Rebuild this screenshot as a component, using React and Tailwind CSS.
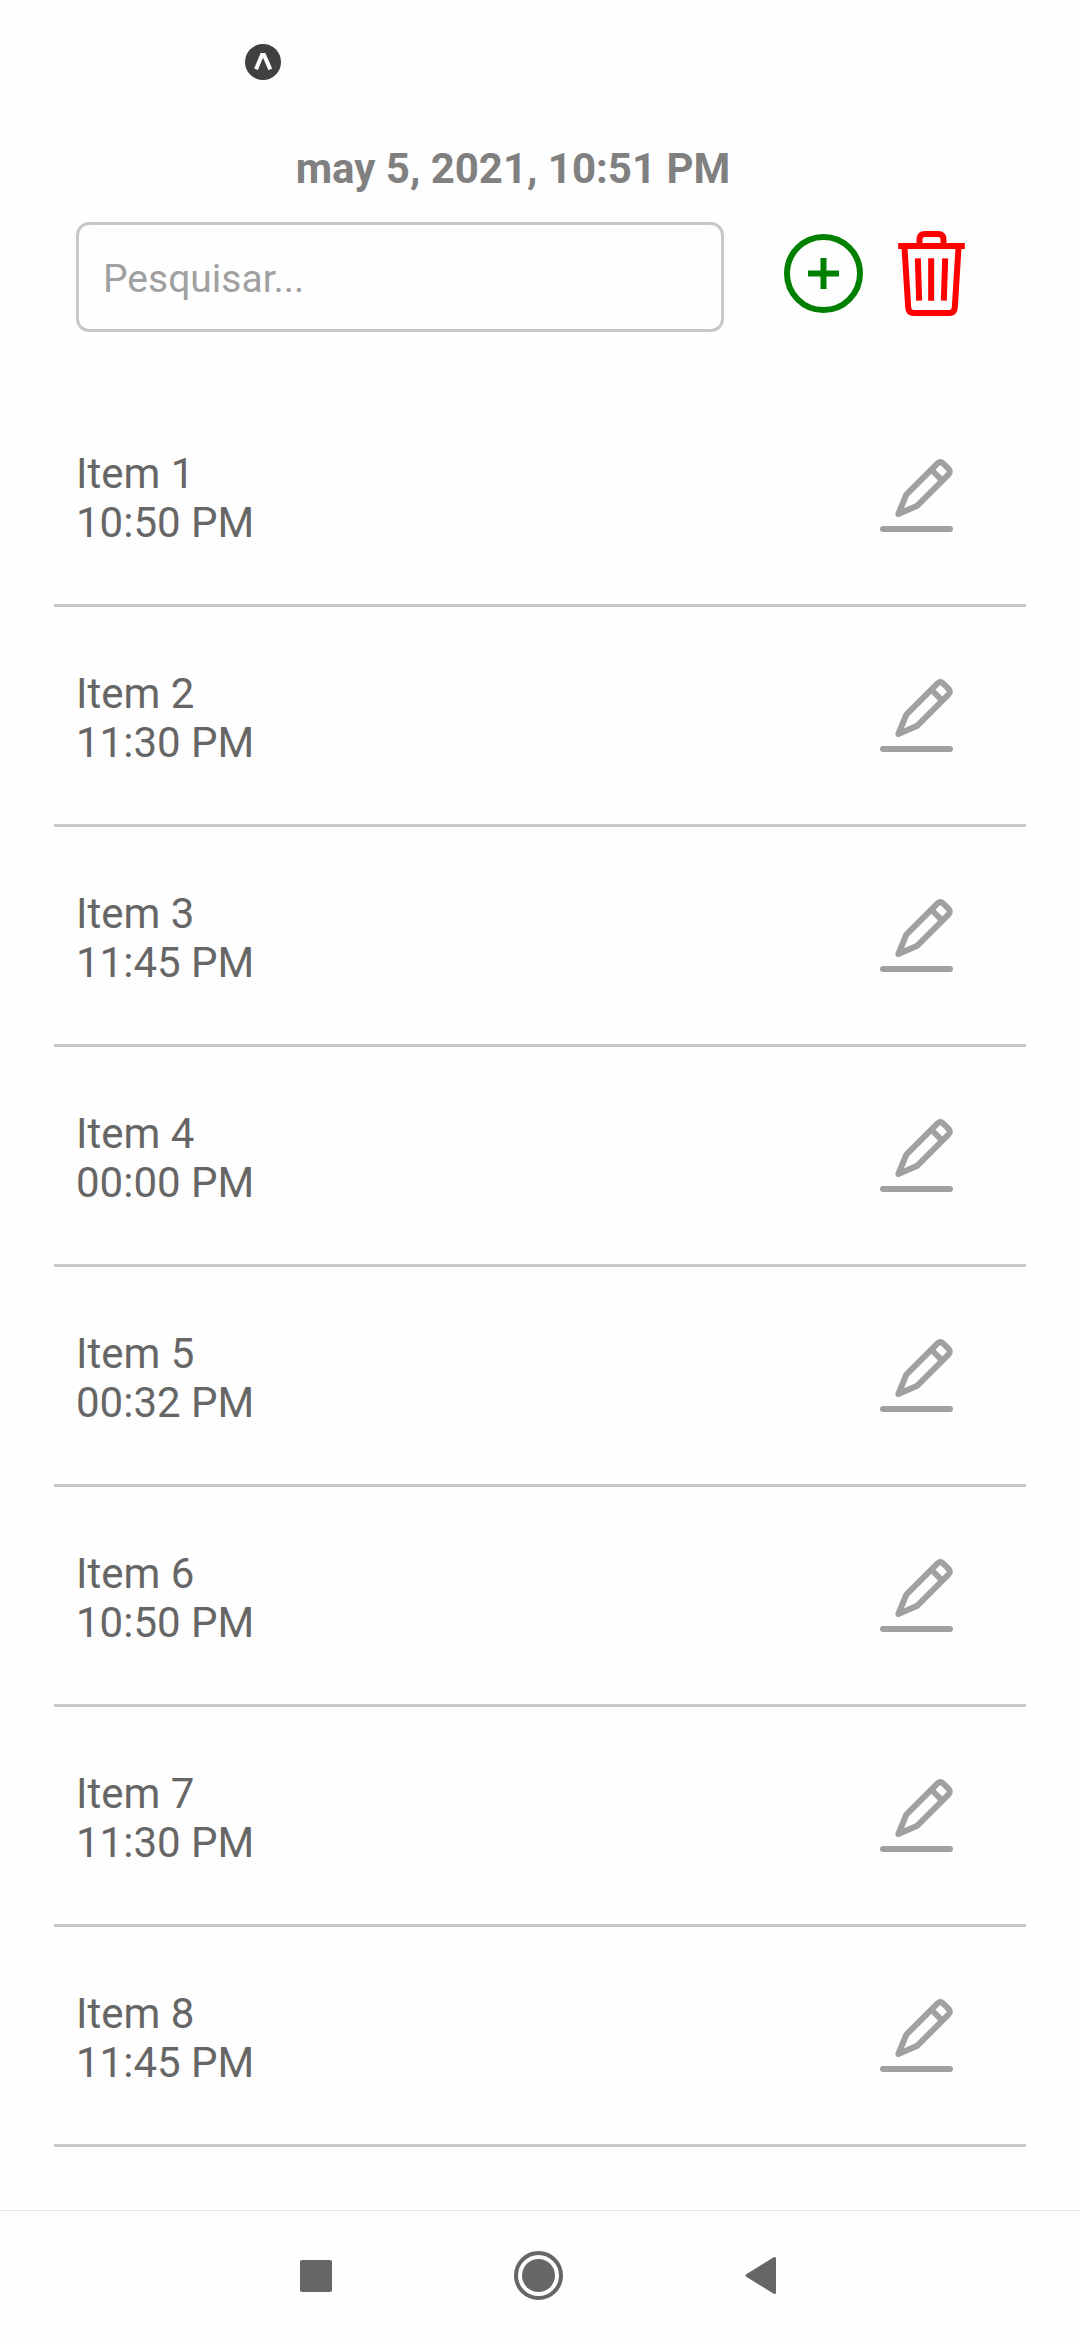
import React from "react";

const items = [
  { name: "Item 1", time: "10:50 PM" },
  { name: "Item 2", time: "11:30 PM" },
  { name: "Item 3", time: "11:45 PM" },
  { name: "Item 4", time: "00:00 PM" },
  { name: "Item 5", time: "00:32 PM" },
  { name: "Item 6", time: "10:50 PM" },
  { name: "Item 7", time: "11:30 PM" },
  { name: "Item 8", time: "11:45 PM" },
];

function BadgeIcon() {
  return (
    <svg viewBox="0 0 108 108" className="size-9" aria-hidden="true">
      <circle cx="54" cy="54" r="54" fill="#404040" />
      <path d="M33 76 L51 33 H57 L76 76" fill="none" stroke="#fff" strokeWidth="12" />
    </svg>
  );
}

function PlusIcon() {
  return (
    <svg viewBox="0 0 79 79" className="size-[79px]" fill="none" stroke="#008000" strokeWidth="6" aria-hidden="true">
      <circle cx="39.5" cy="39.5" r="36.5" />
      <path d="M24 39.5 H55 M39.5 24 V55" />
    </svg>
  );
}

function TrashIcon() {
  return (
    <svg viewBox="0 0 200 255" className="h-[85px] w-[67px]" fill="none" stroke="#ff0000" strokeWidth="18" aria-hidden="true">
      <path d="M0 45 H200" />
      <path d="M64 42 V26 Q64 9 80 9 H120 Q136 9 136 26 V42" />
      <path d="M19 50 L30 228 Q31 246 47 246 H153 Q169 246 170 228 L181 50" />
      <path d="M59 82 L63 209 M99 82 V209 M141 82 L137 209" />
    </svg>
  );
}

function PencilIcon() {
  return (
    <svg
      viewBox="0 0 219 219"
      className="size-[73px]"
      fill="none"
      stroke="#a0a0a0"
      strokeWidth="18"
      strokeLinecap="round"
      strokeLinejoin="round"
      aria-hidden="true"
    >
      <path d="M55 165 L79 107 L172 14 Q181 5 190 14 L205 29 Q214 38 205 47 L112 140 Z" />
      <path d="M158 36 L183 61" strokeLinecap="butt" />
      <path d="M9 210 H210" />
    </svg>
  );
}

function ListItem({ name, time }) {
  return (
    <li className="flex h-[220px] items-start justify-between border-b-[3px] border-[#c8c8c8] pr-[73px] pl-[22px]">
      <div className="pt-[62px] text-[42px] leading-[49px] text-[#666666]">
        <p>{name}</p>
        <p>{time}</p>
      </div>
      <button type="button" aria-label={"Editar " + name} className="mt-[72px]">
        <PencilIcon />
      </button>
    </li>
  );
}

export default function App() {
  return (
    <div className="flex min-h-screen flex-col bg-[#fefefe] font-['Roboto',sans-serif]">
      <div className="flex h-[144px] items-start pt-11 pl-[245px]">
        <BadgeIcon />
      </div>

      <main className="px-[54px]">
        <h1 className="pr-[54px] text-center text-[42px] leading-[49px] font-bold text-[#808080]">
          may 5, 2021, 10:51 PM
        </h1>

        <div className="mt-[29px] flex items-start pr-[61px] pl-[22px]">
          <input
            type="text"
            aria-label="Pesquisar"
            placeholder="Pesquisar..."
            className="h-[110px] min-w-0 flex-1 rounded-[13px] border-[3px] border-[#c8c8c8] bg-transparent px-6 pt-1 text-[39px] text-[#666666] outline-none placeholder:text-[#a0a0a0]"
          />
          <div className="flex items-center gap-[35px] pt-[9px] pl-[60px]">
            <button type="button" aria-label="Adicionar">
              <PlusIcon />
            </button>
            <button type="button" aria-label="Excluir">
              <TrashIcon />
            </button>
          </div>
        </div>

        <ul className="mt-[55px]">
          {items.map((item) => (
            <ListItem key={item.name} name={item.name} time={item.time} />
          ))}
        </ul>
      </main>

      <nav className="mt-auto flex h-[130px] items-center justify-center gap-[182px] border-t border-[#e4e4e4] pr-1">
        <button type="button" aria-label="Recentes">
          <svg viewBox="0 0 32 32" className="size-8" aria-hidden="true">
            <rect width="32" height="32" rx="2" fill="#666666" />
          </svg>
        </button>
        <button type="button" aria-label="Início">
          <svg viewBox="0 0 49 49" className="size-[49px]" aria-hidden="true">
            <circle cx="24.5" cy="24.5" r="22.5" fill="none" stroke="#666666" strokeWidth="4" />
            <circle cx="24.5" cy="24.5" r="16.5" fill="#666666" />
          </svg>
        </button>
        <button type="button" aria-label="Voltar">
          <svg viewBox="0 0 31 37" className="h-[37px] w-[31px]" aria-hidden="true">
            <path d="M2 18.5 L29.5 1.5 V35.5 Z" fill="#666666" stroke="#666666" strokeWidth="3" strokeLinejoin="round" />
          </svg>
        </button>
      </nav>
    </div>
  );
}
